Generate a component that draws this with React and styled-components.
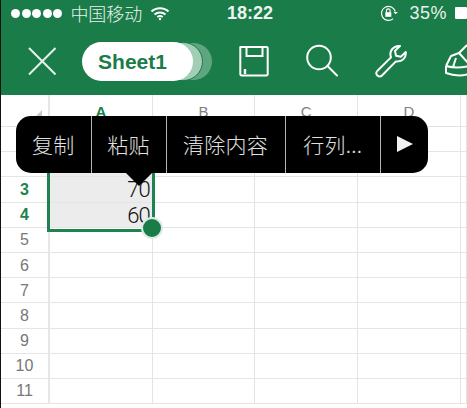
import React from "react";
import styled, { createGlobalStyle } from "styled-components";

const Global = createGlobalStyle`
  html, body { margin: 0; padding: 0; background: #fff; }
  body { font-family: "Liberation Sans", "Noto Sans CJK SC", sans-serif; }
`;
const Page = styled.div`
  position: relative; width: 467px; height: 408px; overflow: hidden; background: #fff;
  border-left: 1px solid #111; box-sizing: border-box;
`;
const Header = styled.header`
  height: 95px; background: #1a7c48; color: #fff; display: flex; flex-direction: column;
`;
const StatusBar = styled.div`
  height: 26px; display: grid; grid-template-columns: 216px auto 1fr; align-items: center; padding: 0 0 0 10px;
`;
const StatusLeft = styled.div`display: flex; align-items: center; gap: 8px;`;
const Dots = styled.div`display: flex; gap: 1.6px;`;
const Dot = styled.span`width: 9px; height: 9px; border-radius: 50%; background: #fff;`;
const Carrier = styled.span`font-size: 18px; font-weight: 300; opacity: .9; font-family: "Noto Sans CJK SC", sans-serif;`;
const Time = styled.span`font-size: 18px; font-weight: 700; opacity: .92;`;
const StatusRight = styled.div`display: flex; align-items: center; justify-content: flex-end; gap: 8px;`;
const Percent = styled.span`font-size: 18px; letter-spacing: .5px; opacity: .9;`;
const Battery = styled.span`width: 12px; height: 12px; background: #fff; display: block; border-radius: 1px;`;
const Toolbar = styled.div`
  flex: 1; display: flex; align-items: center; padding: 0 0 0 27px; position: relative;
`;
const IconButton = styled.span`display: block; flex: none; width: ${p => p.$w}px; height: 34px; margin-left: ${p => p.$ml || 0}px;`;
const SheetTabs = styled.div`position: relative; width: 131px; height: 39px; margin: 2px 0 0 26px; flex: none;`;
const Tab = styled.span`
  position: absolute; top: 0; left: 0; width: 111px; height: 39px; border-radius: 20px; box-sizing: border-box;
  display: flex; align-items: center; justify-content: center; padding-right: 10px;
  background: ${p => p.$bg}; color: #1a7c48; font-size: 21px; font-weight: 700;
  transform: translateX(${p => p.$x}px); border: 1px solid #1a7c48;
  border-width: ${p => (p.$x === 0 ? "0" : "1px")};
`;
const Sheet = styled.main`
  display: grid; grid-template-columns: 49px repeat(4, 102.7px) 1fr; grid-template-rows: 32px repeat(11, 25.2px);
`;
const Corner = styled.div`
  display: flex; justify-content: flex-end; align-items: flex-start; padding: 15px 6px 0 0; box-sizing: border-box;
  border-right: 2px solid #e6e6e6; border-bottom: 1px solid #e3e3e3;
`;
const CornerMark = styled.span`
  display: block; width: 0; height: 0; border-bottom: 7px solid #c9c9c9; border-left: 7px solid transparent;
`;
const ColHead = styled.div`
  display: flex; align-items: flex-start; justify-content: center; padding-top: 8px; box-sizing: border-box;
  font-size: 15px; color: ${p => (p.$active ? "#1a7c48" : "#808080")}; font-weight: ${p => (p.$active ? 700 : 400)};
  border-right: 1px solid #e4e4e4; border-bottom: 1px solid #e3e3e3;
`;
const RowHead = styled.div`
  display: flex; align-items: center; justify-content: center; font-size: 16px; padding-top: 1px;
  color: ${p => (p.$active ? "#1f8350" : "#777")}; font-weight: ${p => (p.$active ? 700 : 400)};
  border-right: 2px solid #e6e6e6; border-bottom: 1px solid #e5e5e5; box-sizing: border-box;
`;
const Cell = styled.div`
  display: flex; align-items: center; justify-content: flex-end; padding: 2px 2px 0 0; box-sizing: border-box;
  border-right: 1px solid #e4e4e4; border-bottom: 1px solid #e5e5e5;
  background: ${p => (p.$sel ? "#ececec" : "#fff")};
  font-size: 22px; line-height: 1; letter-spacing: -1px; color: #111; font-family: Roboto, sans-serif; font-weight: 300;
`;
const Selection = styled.div`
  position: absolute; left: 46px; top: 126px; width: 108px; height: 106px; box-sizing: border-box;
  border: 3px solid #1f8350; pointer-events: none;
`;
const Handle = styled.span`
  position: absolute; right: -11px; bottom: -10px; width: 22px; height: 22px; border-radius: 50%; box-sizing: border-box;
  background: #1a7c48; border: 2px solid #dbece2;
`;
const Menu = styled.div`
  position: absolute; left: 15px; top: 116px; width: 412px; height: 56.5px; background: #000; border-radius: 15px;
  display: flex; color: #e0e0e0; font-size: 21px; font-family: "Noto Sans CJK SC", sans-serif; font-weight: 300;
`;
const MenuItem = styled.div`
  width: ${p => p.$w}px; flex: none; display: flex; align-items: center; justify-content: center; box-sizing: border-box;
  border-left: ${p => (p.$first ? "none" : "1.5px solid #b5b5b5")}; letter-spacing: .3px;
`;
const Pointer = styled.span`
  position: absolute; left: 109px; top: 56px; width: 0; height: 0;
  border-left: 14px solid transparent; border-right: 14px solid transparent; border-top: 14px solid #000;
`;
const Play = styled.span`
  display: block; width: 0; height: 0; margin-left: 1px;
  border-left: 16px solid #f2f2f2; border-top: 8px solid transparent; border-bottom: 8px solid transparent;
`;

const Wifi = () => (
  <svg width="20" height="15" viewBox="0 0 20 15" fill="none" stroke="#fff" strokeWidth="2">
    <path d="M1.5 5.5C6 1 14 1 18.5 5.5" /><path d="M4.5 8.5C7.5 5.7 12.5 5.7 15.5 8.5" /><path d="M7.3 11C8.8 9.8 11.2 9.8 12.7 11" />
    <circle cx="10" cy="13" r="1.2" fill="#fff" stroke="none" />
  </svg>
);
const RotationLock = () => (
  <svg width="19" height="17" viewBox="0 0 19 17" fill="none" stroke="#fff" strokeWidth="1.2" style={{ marginRight: 2 }}>
    <path d="M15.2 6.5A7 7 0 1 0 13 13.7" />
    <path d="M13.5 7l2 2.3L18 7" fill="#fff" stroke="none" />
    <rect x="5.3" y="7.2" width="6" height="4.6" fill="#fff" stroke="none" />
    <path d="M6.5 7.2V5.6a1.8 1.8 0 0 1 3.6 0v1.6" />
  </svg>
);
const CloseIcon = () => (
  <svg width="28" height="34" viewBox="0 0 28 34" fill="none" stroke="#e6f1ea" strokeWidth="2">
    <path d="M1 4l26.5 26.5M27.5 4L1 30.5" />
  </svg>
);
const SaveIcon = () => (
  <svg width="30" height="34" viewBox="0 0 30 34" fill="none" stroke="#fff" strokeWidth="2">
    <path d="M1.5 3h26a1.2 1.2 0 0 1 1.2 1.2v26a1.2 1.2 0 0 1-1.2 1.2H2.5a1.2 1.2 0 0 1-1.2-1.2V3z" strokeLinejoin="round" />
    <path d="M7.5 3v9h16V3" />
    <path d="M6 25v5" strokeWidth="2.4" />
  </svg>
);
const SearchIcon = () => (
  <svg width="32" height="34" viewBox="0 0 32 34" fill="none" stroke="#fff" strokeWidth="2">
    <circle cx="13" cy="13.5" r="11.8" /><path d="M21.5 22L31 31.5" strokeLinecap="round" />
  </svg>
);
const WrenchIcon = () => (
  <svg width="32" height="34" viewBox="0 0 32 34" fill="none" stroke="#fff" strokeWidth="2" strokeLinejoin="round">
    <path d="M2.2 27L16 13.4c-1.6-4.5 0-9.5 6-11.2 1.1-.3 2-.3 3-.1l-5 4.8 1 4.8 4.8 1.1 5-4.7c.6 5.6-3.4 10-9.9 9.3L7 31.5c-1.2 1.4-3.3 1.3-4.6.1-1.3-1.3-1.3-3.2-.2-4.6z" />
  </svg>
);
const PenIcon = () => (
  <svg width="24" height="34" viewBox="0 0 24 34" fill="none" stroke="#fff" strokeWidth="2" strokeLinejoin="round">
    <path d="M1 22L6 12l8-3 10 11" /><path d="M1 22c7 2 15 2 23 0" /><path d="M1 22c0 3 0 5 0 7 8 3 16 3 23 1" />
    <path d="M14 9l8-8" /><path d="M8 23l3-9" />
  </svg>
);

const columns = ["A", "B", "C", "D", ""];
const rows = [
  { n: "", v: "" }, { n: "", v: "" }, { n: 3, v: "70" }, { n: 4, v: "60" },
  { n: 5 }, { n: 6 }, { n: 7 }, { n: 8 }, { n: 9 }, { n: 10 }, { n: 11 }
];
const items = [["复制", 74.5], ["粘贴", 75], ["清除内容", 119], ["行列...", 95.5]];

export default function App() {
  return (
    <Page>
      <Global />
      <Header>
        <StatusBar>
          <StatusLeft>
            <Dots>{[0, 1, 2, 3, 4].map(i => <Dot key={i} />)}</Dots>
            <Carrier>中国移动</Carrier>
            <Wifi />
          </StatusLeft>
          <Time>18:22</Time>
          <StatusRight>
            <RotationLock />
            <Percent>35%</Percent>
            <Battery />
          </StatusRight>
        </StatusBar>
        <Toolbar>
          <IconButton $w={28}><CloseIcon /></IconButton>
          <SheetTabs>
            <Tab $bg="#5ea67f" $x={20} />
            <Tab $bg="#a2cdb6" $x={10} />
            <Tab $bg="#fff" $x={0}>Sheet1</Tab>
          </SheetTabs>
          <IconButton $w={30} $ml={26}><SaveIcon /></IconButton>
          <IconButton $w={32} $ml={37}><SearchIcon /></IconButton>
          <IconButton $w={32} $ml={37}><WrenchIcon /></IconButton>
          <IconButton $w={24} $ml={38}><PenIcon /></IconButton>
        </Toolbar>
      </Header>
      <Sheet>
        <Corner><CornerMark /></Corner>
        {columns.map((c, i) => <ColHead key={i} $active={c === "A"}>{c}</ColHead>)}
        {rows.map((r, ri) => (
          <React.Fragment key={ri}>
            <RowHead $active={ri === 2 || ri === 3}>{r.n}</RowHead>
            {columns.map((_, ci) => (
              <Cell key={ci} $sel={ci === 0 && ri < 4}>{ci === 0 ? r.v : ""}</Cell>
            ))}
          </React.Fragment>
        ))}
      </Sheet>
      <Selection><Handle /></Selection>
      <Menu>
        {items.map(([t, w], i) => <MenuItem key={t} $w={w} $first={i === 0}>{t}</MenuItem>)}
        <MenuItem $w={48}><Play /></MenuItem>
        <Pointer />
      </Menu>
    </Page>
  );
}
